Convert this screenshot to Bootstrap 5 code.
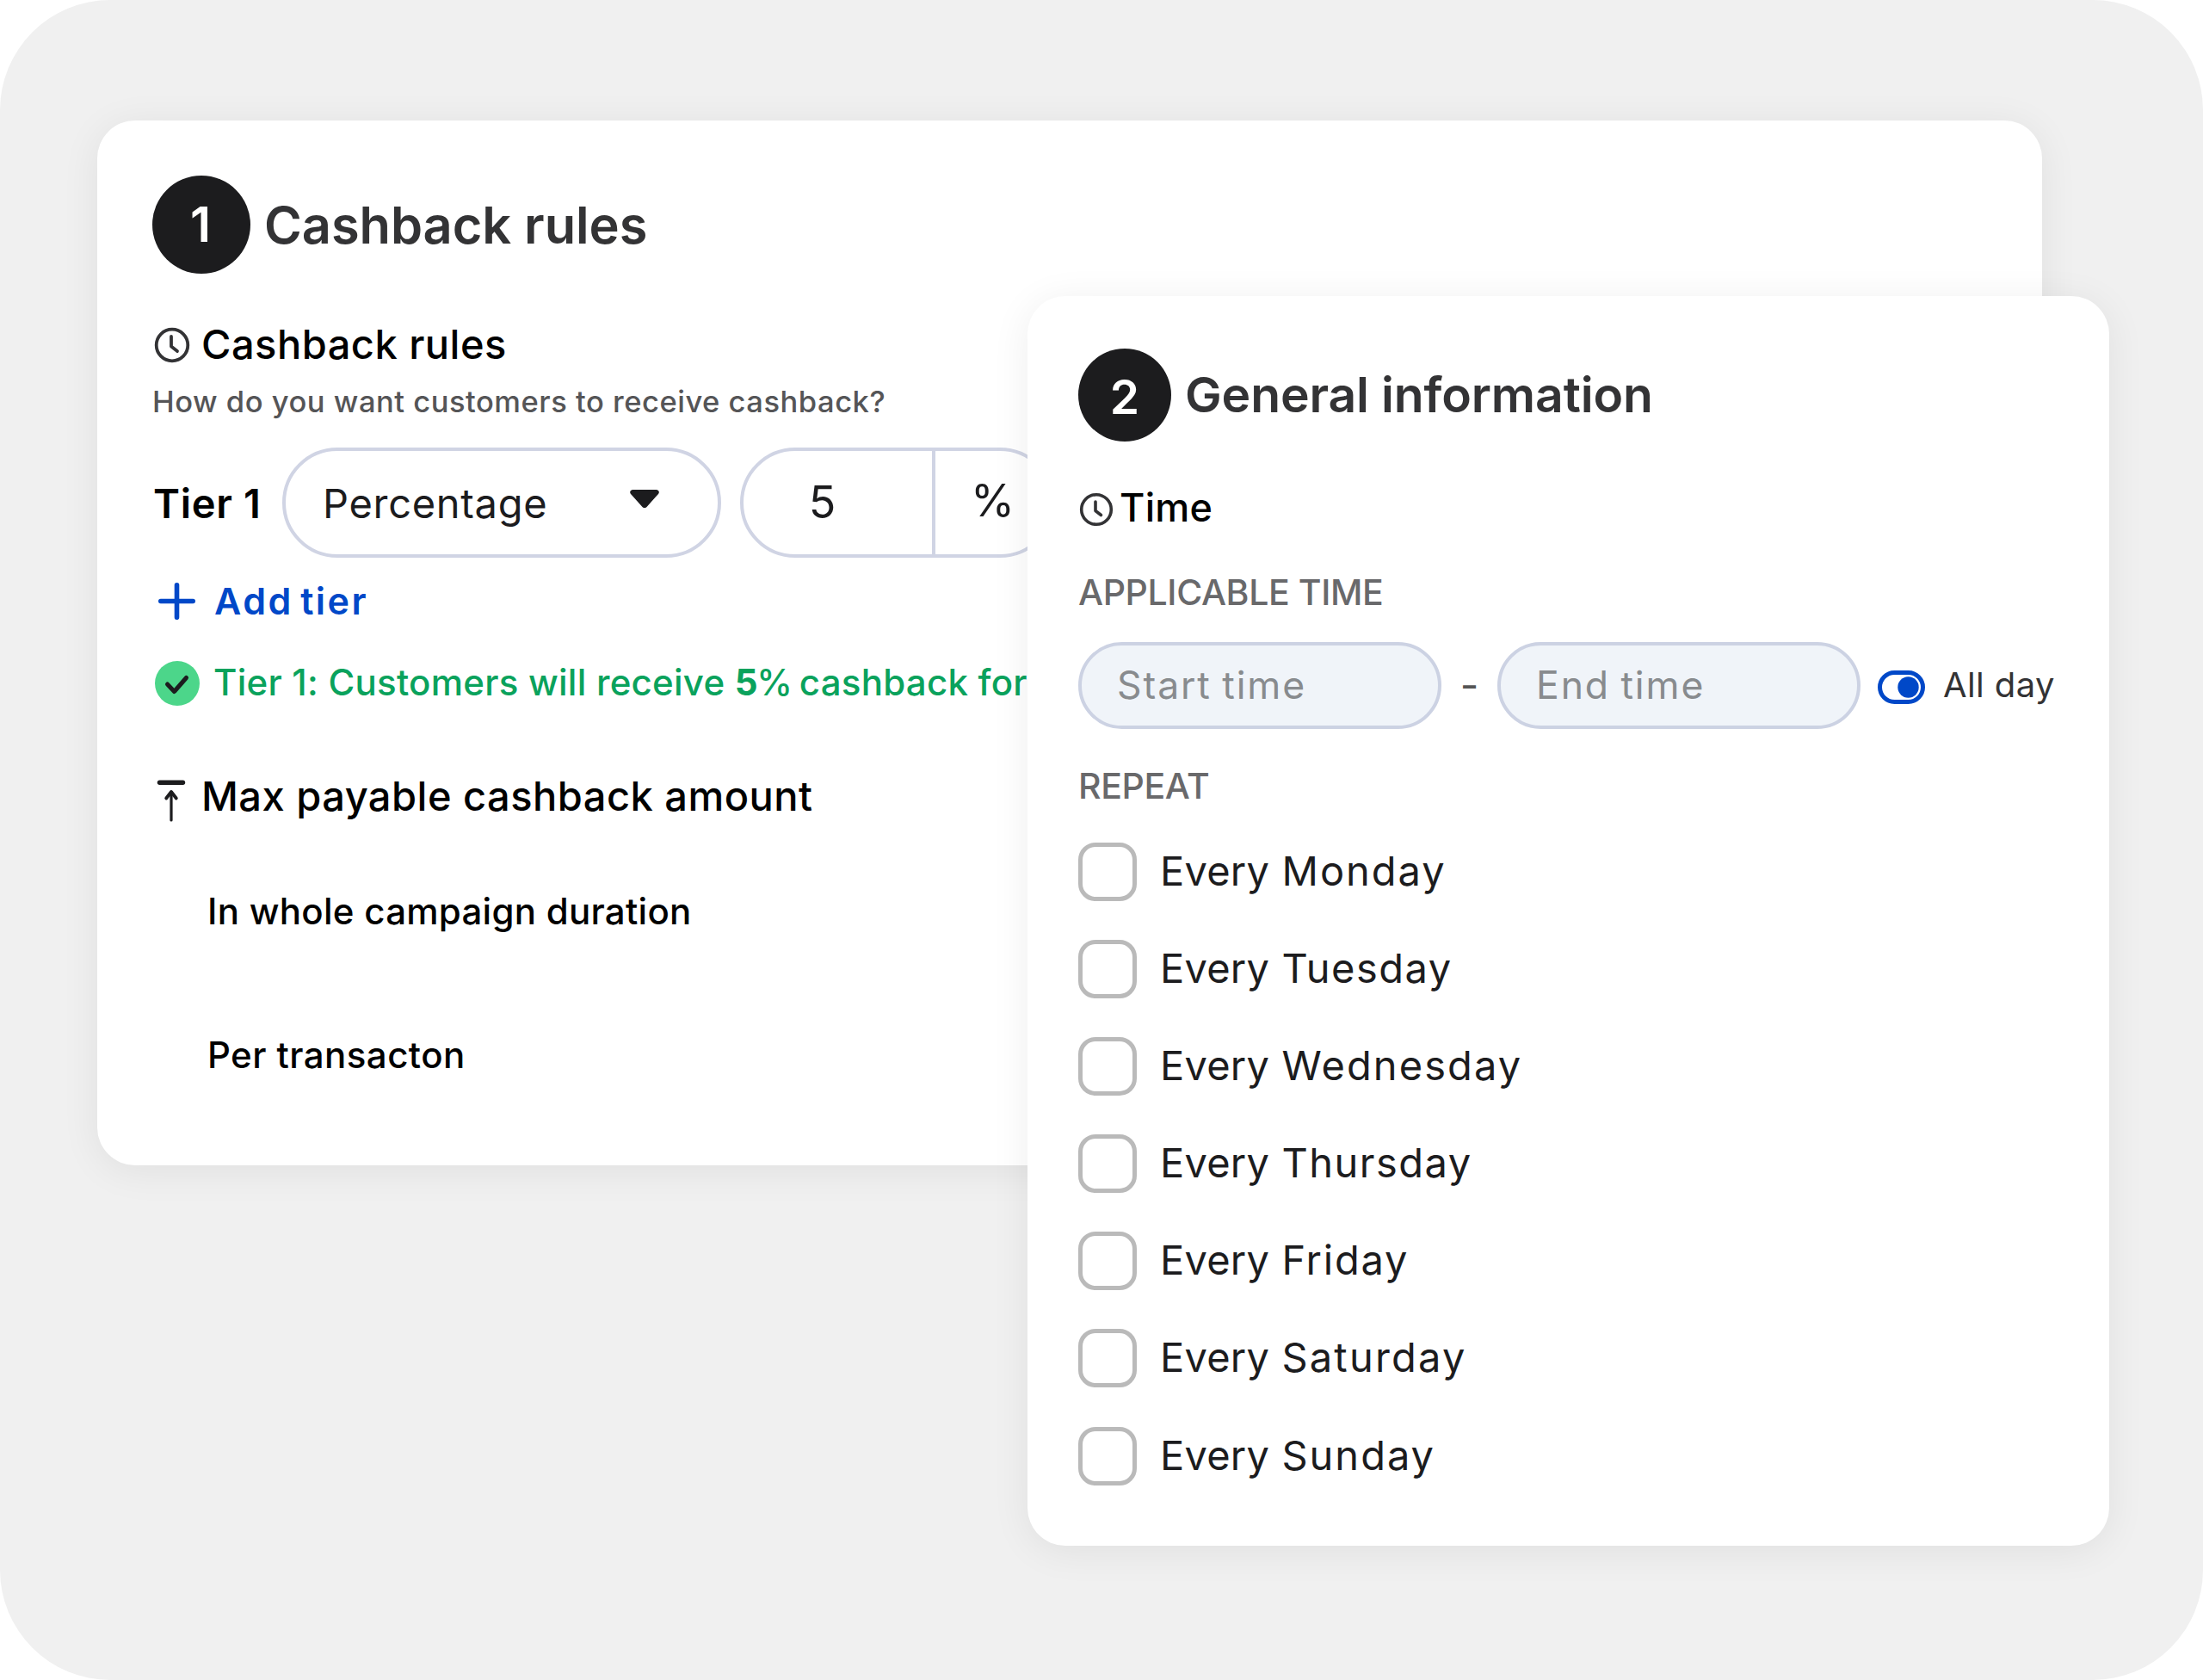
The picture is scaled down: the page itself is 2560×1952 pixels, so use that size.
<!DOCTYPE html>
<html lang="en">
<head>
<meta charset="utf-8">
<meta name="viewport" content="width=device-width, initial-scale=1">
<title>Cashback campaign</title>
<link href="https://cdn.jsdelivr.net/npm/bootstrap@5.3.0/dist/css/bootstrap.min.css" rel="stylesheet">
<script src="https://cdn.jsdelivr.net/npm/bootstrap@5.3.0/dist/js/bootstrap.bundle.min.js"></script>
<style>
  body { font-family: Inter, "Liberation Sans", sans-serif; color: #000; background: #fff; }
  .stage { width: 2560px; height: 1952px; background: #f0f0f0; border-radius: 128px; padding: 140px 187px 0 113px; }
  .panel { border: 0; border-radius: 44px; background: #fff; box-shadow: 0 6px 46px rgba(0,0,0,.07); }
  .panel-rules { height: 1214px; padding: 64px 0 0 64px; }
  .panel-info { position: absolute; left: 1194px; top: 344px; width: 1257px; height: 1452px; padding: 61px 0 0 59px; }
  .line { white-space: nowrap; line-height: 1; }

  .step { width: 114px; height: 114px; font-size: 57px; font-weight: 600; background: #1c1c1e; color: #fff; line-height: 1; padding: 0 2px 1px 0; }
  .panel-info .step { width: 108px; height: 108px; font-size: 55px; padding: 4px 0 0; }
  .heading-lg { font-size: 59.5px; font-weight: 600; letter-spacing: -.05px; color: #333335; margin: 1px 0 0 16px; line-height: 1; }
  .panel-info .heading-lg { font-size: 57px; letter-spacing: -.13px; margin: -2px 0 0 16px; }
  .heading-md { font-size: 47px; font-weight: 500; letter-spacing: .48px; margin: 0; line-height: 1; }

  .row-sub { height: 56px; margin-top: 54px; }
  .row-sub .heading-md { margin: -2px 0 0 13px; }
  .row-help { height: 40px; margin-top: 19px; font-size: 34.5px; font-weight: 500; letter-spacing: .52px; color: #555557; }
  .row-tier { height: 128px; margin-top: 33px; }
  .tier-label { font-size: 47px; font-weight: 600; letter-spacing: .68px; width: 151px; padding-left: 1px; }
  .pill { border: 4px solid #d0d4e4; border-radius: 64px; background: #fff; color: #1c1c1e; }
  .pill-select { width: 510px; height: 128px; font-size: 47px; letter-spacing: .7px; padding: 0 68px 0 43px; }
  .pill-select svg { margin-top: -10px; }
  .pill-amount { width: 366px; height: 128px; margin-left: 22px; font-size: 52px; }
  .amount-value { width: 223px; height: 120px; border-right: 4px solid #d0d4e4; padding-right: 36px; }
  .amount-unit { padding: 0 0 5px 41px; }
  .row-add { height: 56px; margin-top: 22px; font-size: 43px; font-weight: 600; letter-spacing: 2.5px; word-spacing: -5px; color: #0048c8; }
  .row-add svg { margin: 1px 0 0 7px; }
  .row-add span { margin-left: 22px; }
  .row-note { height: 52px; margin-top: 42px; font-size: 42px; font-weight: 500; letter-spacing: .25px; color: #0aa25c; }
  .row-note svg { margin-left: 3px; }
  .row-note span { margin: -3px 0 0 16px; }
  .row-note b { font-weight: 700; letter-spacing: -1.5px; }
  .row-note i { font-style: normal; letter-spacing: -3.5px; }
  .row-max { height: 60px; margin-top: 75px; }
  .row-max svg { margin: 11px 0 0 5px; }
  .row-max .heading-md { margin: -2px 0 0 18px; }
  .row-limit { height: 40px; padding-left: 64px; font-size: 42px; font-weight: 500; letter-spacing: .27px; }
  .row-limit.first { margin-top: 84px; }
  .row-limit.second { margin-top: 127px; letter-spacing: .44px; }

  .row-time { height: 40px; margin-top: 59px; }
  .row-time .heading-md { font-size: 45px; letter-spacing: .31px; margin: -5px 0 0 7px; }
  .caption-sm { height: 40px; font-size: 41px; font-weight: 500; letter-spacing: -.38px; color: #69696b; }
  .caption-time { margin-top: 56px; }
  .caption-repeat { margin-top: 46px; }
  .row-inputs { height: 101px; margin-top: 38px; }
  .pill-time { width: 422px; height: 101px; background: #f0f4f9; border-color: #ccd2e3; font-size: 44.5px; letter-spacing: 1.9px; word-spacing: -2px; color: #888b8e; padding: 0 0 1px 41px; }
  .dash-mark { width: 65px; font-size: 47px; color: #555; padding-bottom: 2px; }
  .toggle-label { font-size: 40px; letter-spacing: .4px; color: #333335; margin: -2px 0 0 21px; }
  .toggle-svg { margin: 4px 0 0 20px; }
  .day-list { margin-top: 46px; gap: 45.1px; }
  .day-list .day-box[type=checkbox] { width: 68px; height: 68px; margin: 0; border: 5.5px solid #bababa; border-radius: 20px; background: #fff; float: none; flex: none; }
  .day-name { font-size: 47px; letter-spacing: .2px; word-spacing: 1px; color: #1c1c1e; margin: -3px 0 0 27px; line-height: 1; }
  .day-name span { letter-spacing: 2px; }
  .day-name .tue { letter-spacing: 1.5px; } .day-name .wed { letter-spacing: 2.1px; } .day-name .thu { letter-spacing: 1.5px; }
  .day-name .fri { letter-spacing: 1.8px; } .day-name .sat { letter-spacing: 2.2px; }
  svg { display: block; flex: none; }
</style>
</head>
<body>
<main class="stage position-relative overflow-hidden">

  <section class="card panel panel-rules">
    <div class="d-flex align-items-center">
      <div class="step rounded-circle d-flex align-items-center justify-content-center">1</div>
      <h1 class="heading-lg">Cashback rules</h1>
    </div>

    <div class="row-sub d-flex align-items-center line">
      <svg width="44" height="44" viewBox="0 0 44 44" fill="none" stroke="#333335" stroke-width="3.8" stroke-linecap="round" stroke-linejoin="round"><circle cx="23" cy="23" r="18.3"/><path d="M22 13v11.500l7 5.500"/></svg>
      <h2 class="heading-md">Cashback rules</h2>
    </div>
    <div class="row-help d-flex align-items-center line">How do you want customers to receive cashback?</div>

    <div class="row-tier d-flex align-items-center line">
      <div class="tier-label">Tier 1</div>
      <div class="pill pill-select d-flex align-items-center justify-content-between">
        <span>Percentage</span>
        <svg width="34" height="21" viewBox="0 0 34 21"><path d="M3.500 0h27c3 0 4.300 3 2.500 5L20 19.500c-1.700 2-4.300 2-6 0L1 5C-.8 3 .5 0 3.500 0z" fill="#1c1c1e"/></svg>
      </div>
      <div class="pill pill-amount d-flex align-items-center">
        <div class="amount-value d-flex align-items-center justify-content-center">5</div>
        <div class="amount-unit">%</div>
      </div>
    </div>

    <div class="row-add d-flex align-items-center line">
      <svg width="43" height="43" viewBox="0 0 43 43" stroke="#0048c8" stroke-width="5.600" stroke-linecap="round"><path d="M21.500 2.800v37.400M2.800 21.500h37.400"/></svg>
      <span>Add tier</span>
    </div>

    <div class="row-note d-flex align-items-center line">
      <svg width="52" height="52" viewBox="0 0 52 52" fill="none"><circle cx="26" cy="26" r="26" fill="#4cd68a"/><path d="M14.500 27l8 8.500L36.500 19.500" stroke="#1c1c1e" stroke-width="5" stroke-linecap="round" stroke-linejoin="round"/></svg>
      <span>Tier 1: Customers will receive <b>5</b><i>%</i> cashback for</span>
    </div>

    <div class="row-max d-flex align-items-center line">
      <svg width="34" height="49" viewBox="0 0 34 49" fill="none" stroke="#1c1c1e" stroke-linecap="round" stroke-linejoin="round"><path d="M3.500 3.200h27" stroke-width="5.400"/><path d="M17 14v33" stroke-width="3.200"/><path d="M11.200 21.500L17 14l5.800 7.500" stroke-width="3.800"/></svg>
      <h2 class="heading-md">Max payable cashback amount</h2>
    </div>
    <div class="row-limit first d-flex align-items-center line">In whole campaign duration</div>
    <div class="row-limit second d-flex align-items-center line">Per transacton</div>
  </section>

  <section class="card panel panel-info">
    <div class="d-flex align-items-center">
      <div class="step rounded-circle d-flex align-items-center justify-content-center">2</div>
      <h1 class="heading-lg">General information</h1>
    </div>

    <div class="row-time d-flex align-items-center line">
      <svg width="41" height="40" viewBox="0 0 41 40" fill="none" stroke="#333335" stroke-width="3.600" stroke-linecap="round" stroke-linejoin="round"><circle cx="21" cy="20" r="17.300"/><path d="M20 11v10.500l6.500 5"/></svg>
      <h2 class="heading-md">Time</h2>
    </div>

    <div class="caption-sm caption-time d-flex align-items-center line">APPLICABLE TIME</div>
    <div class="row-inputs d-flex align-items-center line">
      <div class="pill pill-time d-flex align-items-center">Start time</div>
      <div class="dash-mark text-center">-</div>
      <div class="pill pill-time d-flex align-items-center">End time</div>
      <svg class="toggle-svg" width="55" height="39" viewBox="0 0 55 39"><rect x="2.500" y="2.500" width="50" height="34" rx="17" fill="#fff" stroke="#0048c8" stroke-width="5"/><circle cx="35.500" cy="19.500" r="12.200" fill="#0048c8"/></svg>
      <span class="toggle-label">All day</span>
    </div>

    <div class="caption-sm caption-repeat d-flex align-items-center line">REPEAT</div>
    <div class="day-list d-flex flex-column">
      <label class="d-flex align-items-center line"><input class="form-check-input day-box" type="checkbox"><span class="day-name">Every <span>Monday</span></span></label>
      <label class="d-flex align-items-center line"><input class="form-check-input day-box" type="checkbox"><span class="day-name">Every <span class="tue">Tuesday</span></span></label>
      <label class="d-flex align-items-center line"><input class="form-check-input day-box" type="checkbox"><span class="day-name">Every <span class="wed">Wednesday</span></span></label>
      <label class="d-flex align-items-center line"><input class="form-check-input day-box" type="checkbox"><span class="day-name">Every <span class="thu">Thursday</span></span></label>
      <label class="d-flex align-items-center line"><input class="form-check-input day-box" type="checkbox"><span class="day-name">Every <span class="fri">Friday</span></span></label>
      <label class="d-flex align-items-center line"><input class="form-check-input day-box" type="checkbox"><span class="day-name">Every <span class="sat">Saturday</span></span></label>
      <label class="d-flex align-items-center line"><input class="form-check-input day-box" type="checkbox"><span class="day-name">Every <span>Sunday</span></span></label>
    </div>
  </section>

</main>
</body>
</html>
